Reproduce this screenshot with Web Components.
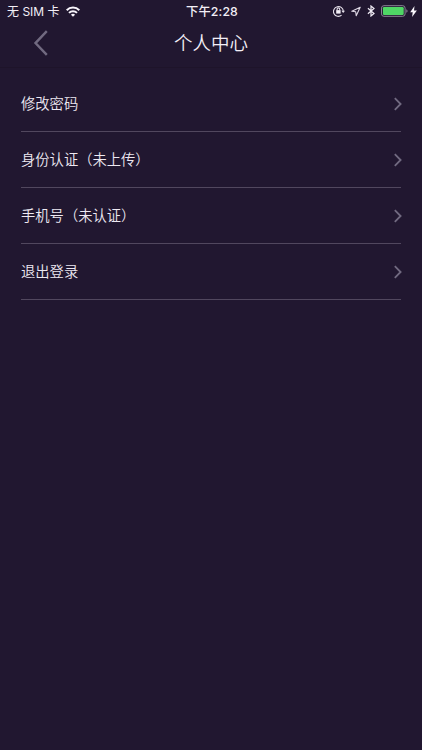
<!DOCTYPE html>
<html lang="zh-CN">
<head>
<meta charset="utf-8">
<title>个人中心</title>
<style>
html,body{margin:0;height:100%;background:#211730}
</style>
</head>
<body>
<profile-page></profile-page>
<script>
const define = (name, html) => customElements.define(name, class extends HTMLElement {
  constructor() {
    super();
    this.attachShadow({ mode: 'open' }).innerHTML = html;
  }
});

define('status-bar', `
<style>
:host{display:grid;grid-template-columns:1fr auto 1fr;align-items:center;height:22px;padding:0 5px 0 7px;box-sizing:border-box;font-size:12px;line-height:20px;color:#f3eff7;white-space:nowrap}
.left,.right{display:flex;align-items:center}
.left{gap:6px}
.left span,.time{padding-top:2px}
.right{justify-content:flex-end}
.time{font-weight:500;font-size:12.3px;letter-spacing:.12px}
svg{display:block;flex:none}
</style>
<div class="left"><span>无 SIM 卡</span>
<svg width="14" height="11" viewBox="0 0 14 11" fill="none" stroke="#f8f5fb" stroke-width="2"><path d="M.7 4.2a8.9 8.9 0 0 1 12.6 0M3 6.9a5.6 5.6 0 0 1 8 0"/><path d="M7 10.8 4.9 8.7a3 3 0 0 1 4.2 0Z" fill="#f8f5fb" stroke="none"/></svg></div>
<div class="time">下午2:28</div>
<div class="right">
<svg style="margin-right:6px" width="12" height="12" viewBox="0 0 12 12" fill="none" stroke="#e4dfe9" stroke-width="1.1"><path d="M8.6 10.2A4.9 4.9 0 1 1 10.3 6.6"/><path d="m8.4 5.8 1.8 2.3L12 5.8Z" fill="#e4dfe9" stroke="none"/><rect x="3.2" y="5.1" width="4.4" height="3.5" fill="#f4f0f7" stroke="none"/><path d="M4.1 5.3V4.2a1.3 1.3 0 0 1 2.6 0v1.1"/></svg>
<svg style="margin-right:6px" width="10" height="11" viewBox="0 0 10 11" fill="none" stroke="#ded8e4" stroke-width="1.1" stroke-linejoin="round"><path d="M9.2 1.2.8 5.3l3.9.4.5 4.1Z"/></svg>
<svg style="margin-right:6px" width="8" height="12" viewBox="0 0 8 12" fill="none" stroke="#f1edf5" stroke-width="1.2"><path d="M.9 3.3 7 8.5 4 11V1l3 2.5-6.1 5.2"/></svg>
<svg style="margin-right:2px" width="27" height="12" viewBox="0 0 27 12"><rect x=".5" y=".7" width="23.6" height="10.6" rx="2.4" fill="none" stroke="#8c8595"/><rect x="1.9" y="2.1" width="20.8" height="7.8" rx="1.2" fill="#4fd765"/><path d="M25.3 4.2q1.3.5 1.3 1.8t-1.3 1.8Z" fill="#8c8595"/></svg>
<svg width="7" height="11" viewBox="0 0 7 11"><path d="M4.5 0 .2 6.2h2.5L2.1 11 6.9 4.5H4Z" fill="#fbf8fd"/></svg>
</div>`);

define('nav-bar', `
<style>
:host{display:grid;grid-template-columns:34px 1fr 34px;height:46px;box-sizing:border-box;border-bottom:1px solid #1e142a;color:#f3eff7}
.back{display:block;margin-top:8px}
.title{text-align:center;font-size:18.5px;line-height:44px;font-weight:350}
</style>
<svg class="back" width="48" height="27" viewBox="0 0 48 27" fill="none" stroke="#716a80" stroke-width="2.4"><path d="M46.8 1.2 35.5 13.1 46.8 24.9"/></svg>
<div class="title"><slot></slot></div>`);

define('menu-row', `
<style>
:host{display:flex;align-items:center;justify-content:space-between;height:56px;box-sizing:border-box;border-bottom:1px solid #51475e;color:#eee9f2;font-size:14.3px;font-weight:350;line-height:20px}
svg{display:block;flex:none;margin-right:-1px}
</style>
<span><slot></slot></span>
<svg width="8" height="14" viewBox="0 0 8 14" fill="none" stroke="#716a80" stroke-width="1.8"><path d="m.8 1.2 5.8 5.8L.8 12.8"/></svg>`);

define('profile-page', `
<style>
:host{display:block;height:750px;overflow:hidden;background:#211730;font-family:"Liberation Sans","Noto Sans CJK SC",sans-serif}
status-bar{font-family:Inter,"Noto Sans CJK SC",sans-serif}
main{display:block;padding:8px 21px 0}
</style>
<status-bar></status-bar>
<nav-bar>个人中心</nav-bar>
<main>
<menu-row>修改密码</menu-row>
<menu-row>身份认证（未上传）</menu-row>
<menu-row>手机号（未认证）</menu-row>
<menu-row>退出登录</menu-row>
</main>`);
</script>
</body>
</html>
